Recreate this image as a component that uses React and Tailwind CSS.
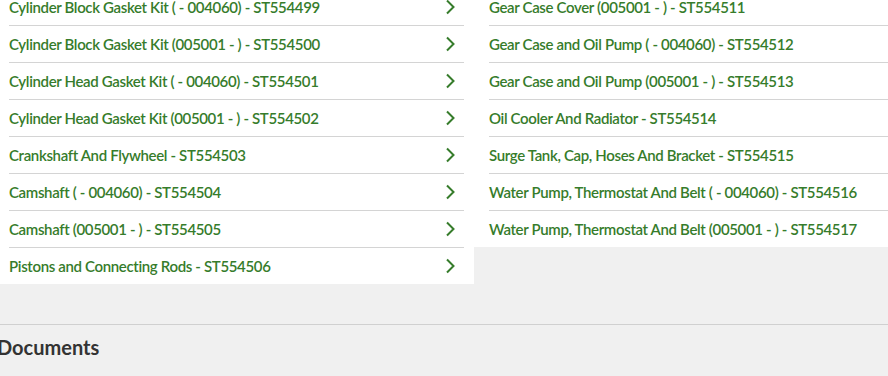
import React from "react";

const left = [
  "Cylinder Block Gasket Kit ( - 004060) - ST554499",
  "Cylinder Block Gasket Kit (005001 - ) - ST554500",
  "Cylinder Head Gasket Kit ( - 004060) - ST554501",
  "Cylinder Head Gasket Kit (005001 - ) - ST554502",
  "Crankshaft And Flywheel - ST554503",
  "Camshaft ( - 004060) - ST554504",
  "Camshaft (005001 - ) - ST554505",
  "Pistons and Connecting Rods - ST554506",
];
const right = [
  "Gear Case Cover (005001 - ) - ST554511",
  "Gear Case and Oil Pump ( - 004060) - ST554512",
  "Gear Case and Oil Pump (005001 - ) - ST554513",
  "Oil Cooler And Radiator - ST554514",
  "Surge Tank, Cap, Hoses And Bracket - ST554515",
  "Water Pump, Thermostat And Belt ( - 004060) - ST554516",
  "Water Pump, Thermostat And Belt (005001 - ) - ST554517",
];

function Chevron() {
  return (
    <svg width="12" height="16" viewBox="0 0 12 16" className="shrink-0">
      <polyline points="3,1.5 9.5,8 3,14.5" fill="none" stroke="#367c2b" strokeWidth="2" />
    </svg>
  );
}

export default function App() {
  return (
    <div className="w-[888px] h-[376px] overflow-hidden bg-[#f0f0f0] font-['Lato',sans-serif]">
      <div className="flex items-start -mt-[11px]">
        <div className="w-[474px] bg-white">
          {left.map((t, i) => (
            <div
              key={t}
              className={`ml-[9px] mr-[10px] flex items-center justify-between pr-[8px] ${i < left.length - 1 ? "h-[37px] border-b border-[#d4d4d4]" : "h-[36px]"}`}
            >
              <span className="text-[15px] font-semibold text-[#367c2b] tracking-[-0.35px]">{t}</span>
              <Chevron />
            </div>
          ))}
        </div>
        <div className="flex-1 bg-white">
          {right.map((t, i) => (
            <div
              key={t}
              className={`ml-[15px] flex items-center ${i < right.length - 1 ? "h-[37px] border-b border-[#d4d4d4]" : "h-[36px]"}`}
            >
              <span className="text-[15px] font-semibold text-[#367c2b] tracking-[-0.35px]">{t}</span>
            </div>
          ))}
        </div>
      </div>
      <div className="mt-[40px] border-t border-[#d0d0d0]">
        <h2 className="-ml-[3px] pt-[8px] text-[20px] font-bold text-[#333333] leading-[28px]">Documents</h2>
      </div>
    </div>
  );
}
